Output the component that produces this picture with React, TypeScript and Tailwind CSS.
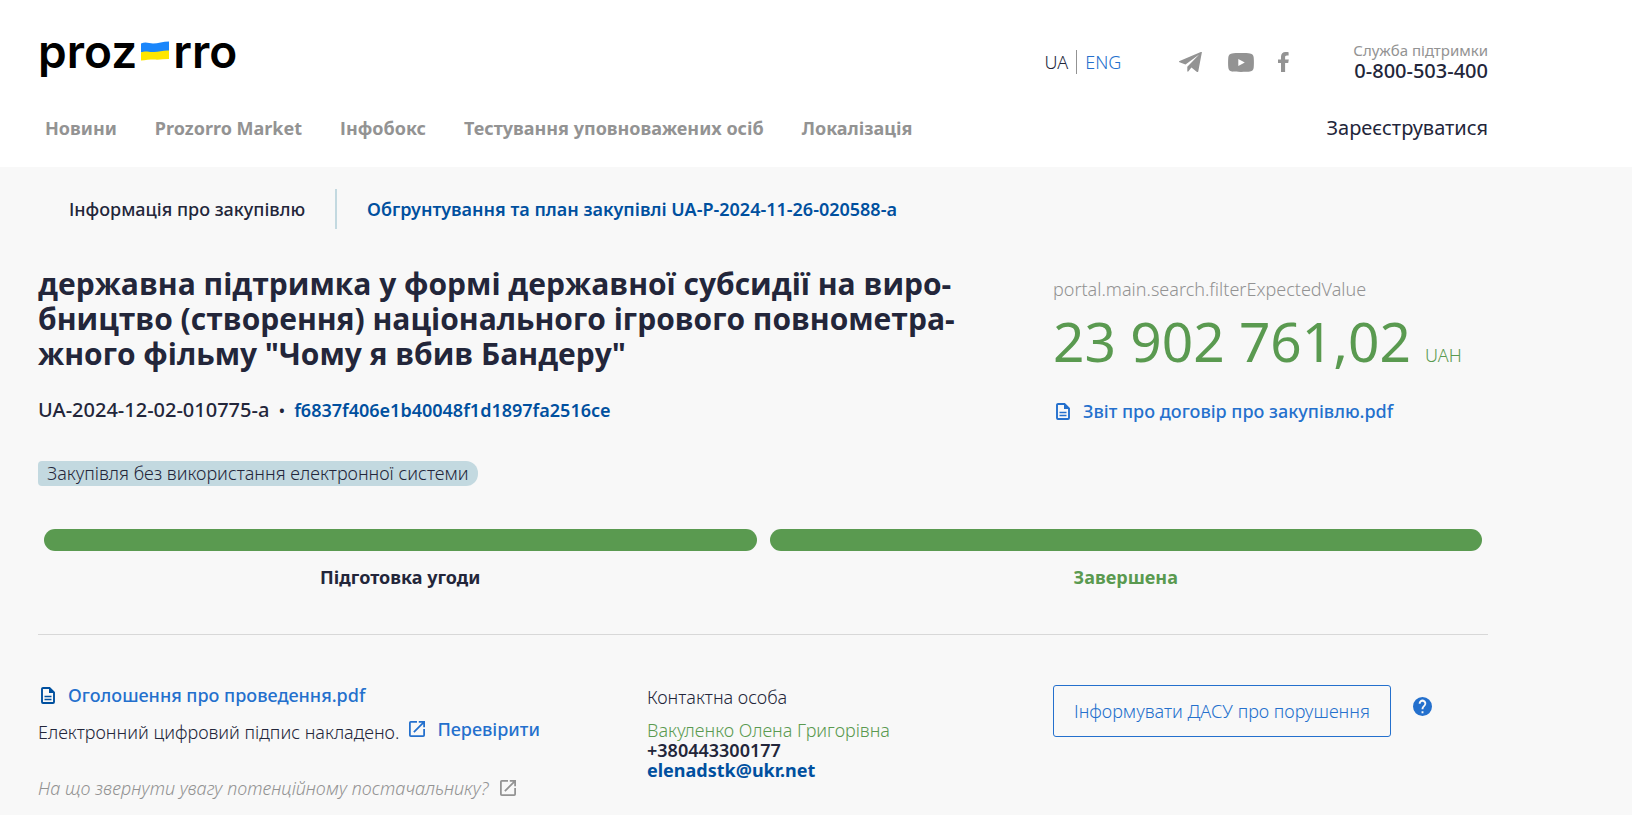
import React from 'react';

const NAV_LINKS = ['Новини', 'Prozorro Market', 'Інфобокс', 'Тестування уповноважених осіб', 'Локалізація'];

const STAGES = [
  { label: 'Підготовка угоди', active: false },
  { label: 'Завершена', active: true },
];

function Logo() {
  return (
    <a href="#" className="flex h-[42px] items-center font-['Inter',sans-serif] text-[46px] font-semibold leading-none text-black">
      <span>proz</span>
      <svg viewBox="0 0 28 19" className="mx-1 h-5 w-7" aria-hidden="true">
        <path d="M0 2c5-2 8 0 12 0 5 0 10-2 16-2v10c-5 0-10 1-15 1-5 0-8-1-13 0z" fill="#1a86fb" />
        <path d="M0 11c5-2 8 0 13-.5 5 0 10-2 15-1.500v8.500c-5 0-10 1-15 .5-5 0-8 .5-13 1z" fill="#ffe600" />
      </svg>
      <span>rro</span>
    </a>
  );
}

function DocIcon({ className }: { className: string }) {
  return (
    <svg viewBox="0 0 14 17" className={`h-[17px] w-[14px] shrink-0 ${className}`} fill="none" aria-hidden="true">
      <path d="M2 1h6.500L13 5.500V15a1 1 0 0 1-1 1H2a1 1 0 0 1-1-1V2a1 1 0 0 1 1-1z" stroke="currentColor" strokeWidth="1.900" />
      <path d="M8 1v5h5z" fill="currentColor" />
      <path d="M3.500 9.500h7M3.500 12.500h7" stroke="currentColor" strokeWidth="1.500" />
    </svg>
  );
}

function ExternalIcon({ className }: { className: string }) {
  return (
    <svg viewBox="3 3 18 18" className={`h-4 w-4 shrink-0 ${className}`} fill="currentColor" aria-hidden="true">
      <path d="M19 19H5V5h7V3H5a2 2 0 0 0-2 2v14a2 2 0 0 0 2 2h14a2 2 0 0 0 2-2v-7h-2v7zM14 3v2h3.590l-9.830 9.830 1.410 1.410L19 6.410V10h2V3h-7z" />
    </svg>
  );
}

function Socials() {
  return (
    <div className="flex items-center text-[#939393]">
      <a href="#" aria-label="Telegram">
        <svg viewBox="0 0 23 20" className="h-5 w-[23px]" fill="currentColor">
          <path d="M22.900.3 19.300 19.300c-.1.700-.7.900-1.300.6l-5.600-4.300-2.900 3.700c-.3.400-.8.500-1 .3-.2-.1-.2-.3-.2-.6v-4.300L20.200 2.400 6.500 12.600.5 10.300c-.7-.3-.7-.9.1-1.200L21.800.1c.7-.3 1.200-.2 1.100.2z" />
        </svg>
      </a>
      <a href="#" aria-label="YouTube" className="ml-[26px]">
        <svg viewBox="0 0 26 19" className="h-[19px] w-[26px]" fill="currentColor">
          <path fillRule="evenodd" d="M4 .4C7 0 19 0 22 .4c2.500.3 3.500 1.600 3.700 4 .3 3 .3 7 0 10.200-.2 2.400-1.200 3.700-3.700 4-3 .4-15 .4-18 0-2.500-.3-3.500-1.600-3.700-4-.3-3.200-.3-7.200 0-10.200C.5 2 1.500.7 4 .4zM10.300 6v7l6.500-3.500z" />
        </svg>
      </a>
      <a href="#" aria-label="Facebook" className="ml-6">
        <svg viewBox="0 0 11 20" className="h-5 w-[11px]" fill="currentColor">
          <path d="M3 20v-9H0V7.400h3V4.800C3 1.700 4.800 0 7.600 0 9 0 10.600.2 10.600.2v3.200H9C7.500 3.400 7.100 4.200 7.100 5.200v2.200h3.700L10.200 11H7.100v9z" />
        </svg>
      </a>
    </div>
  );
}

function Header() {
  return (
    <header className="bg-white">
      <div className="flex h-[167px] max-w-[1488px] flex-col pl-[38px]">
        <div className="flex items-start justify-between pt-[30px]">
          <Logo />
          <div className="flex items-start pt-[10px]">
            <div className="mt-[10px] flex items-center font-[350] leading-6">
              <span className="border-r border-[#939393] pr-2">UA</span>
              <a href="#" className="pl-2 text-[#2470cd]">ENG</a>
            </div>
            <div className="mt-3 ml-[58px]">
              <Socials />
            </div>
            <div className="ml-16 flex flex-col text-right">
              <span className="text-[15px] leading-5 text-[#939393]">Служба підтримки</span>
              <a href="#" className="text-xl font-medium leading-[22px]">0-800-503-400</a>
            </div>
          </div>
        </div>
        <div className="mt-8 flex items-center justify-between">
          <nav className="flex gap-[38px] pl-[7px] font-bold leading-7 text-[#939393]">
            {NAV_LINKS.map(link => (
              <a key={link} href="#">{link}</a>
            ))}
          </nav>
          <a href="#" className="text-xl leading-7">Зареєструватися</a>
        </div>
      </div>
    </header>
  );
}

export default function App() {
  return (
    <div className="min-h-screen overflow-hidden bg-[#f8f8f8] font-['Noto_Sans','Open_Sans',sans-serif] text-lg leading-5 text-[#23263a]">
      <Header />

      <main className="max-w-[1488px] pl-[38px]">
        {/* Tabs */}
        <div className="flex items-center pt-[22px] pl-[31px]">
          <span className="border-r-2 border-[#c3d9e0] py-[10px] pr-[30px] font-medium">Інформація про закупівлю</span>
          <a href="#" className="pl-[30px] font-semibold text-[#00509f]">
            Обгрунтування та план закупівлі UA-P-2024-11-26-020588-a
          </a>
        </div>

        {/* Title and amount */}
        <div className="mt-[37px] grid grid-cols-[70%_30%]">
          <div>
            <h1 className="font-['Open_Sans',sans-serif] text-3xl font-bold leading-[35px]">
              державна підтримка у формі державної субсидії на виро-
              <br />
              бництво (створення) національного ігрового повнометра-
              <br />
              жного фільму "Чому я вбив Бандеру"
            </h1>
            <div className="mt-[27px] flex items-center gap-[9px] leading-6">
              <span className="text-xl font-medium leading-6">UA-2024-12-02-010775-a</span>
              <span>•</span>
              <a href="#" className="font-semibold text-[#00509f]">f6837f406e1b40048f1d1897fa2516ce</a>
            </div>
            <div className="mt-[39px] flex">
              <span className="rounded-l-sm rounded-r-xl bg-[#c3d9e0] px-[9px] font-[350] leading-[25px]">
                Закупівля без використання електронної системи
              </span>
            </div>
          </div>
          <div className="pt-[11px]">
            <div className="font-[350] leading-6 text-[#939393]">portal.main.search.filterExpectedValue</div>
            <div className="flex items-baseline gap-[14px] text-[#5a9a50]">
              <span className="text-[55px] leading-[80px]">23 902 761,02</span>
              <span className="font-[350]">UAH</span>
            </div>
            <a href="#" className="mt-5 flex items-center gap-[13px] pl-[3px] font-medium text-[#2470cd]">
              <DocIcon className="text-[#2470cd]" />
              Звіт про договір про закупівлю.pdf
            </a>
          </div>
        </div>

        {/* Stages */}
        <div className="mt-[43px] grid grid-cols-2 gap-[13px] px-[6px]">
          {STAGES.map(stage => (
            <div key={stage.label} className="text-center">
              <div className="h-[22px] rounded-full bg-[#5a9a50]" />
              <div className={`mt-[14px] font-bold leading-6 ${stage.active ? 'text-[#5a9a50]' : ''}`}>{stage.label}</div>
            </div>
          ))}
        </div>

        <hr className="mt-[45px] border-[#d8d8d8]" />

        {/* Documents, contact, report */}
        <div className="mt-[50px] grid grid-cols-[42%_28%_30%]">
          <div>
            <a href="#" className="flex items-center gap-[13px] pl-[3px] font-medium text-[#2470cd]">
              <DocIcon className="text-[#00509f]" />
              Оголошення про проведення.pdf
            </a>
            <div className="mt-3 flex items-start gap-[10px]">
              <span className="pt-[5px] font-[350]">Електронний цифровий підпис накладено.</span>
              <a href="#" className="flex items-center gap-3 pt-[2px] font-medium text-[#2470cd]">
                <ExternalIcon className="text-[#2470cd]" />
                Перевірити
              </a>
            </div>
            <a href="#" className="mt-9 flex items-center gap-3 font-light italic text-[#939393]">
              На що звернути увагу потенційному постачальнику?
              <ExternalIcon className="text-[#939393]" />
            </a>
          </div>

          <div className="flex flex-col items-start pt-[2px]">
            <span className="font-[350]">Контактна особа</span>
            <span className="mt-[13px] font-[350] text-[#5a9a50]">Вакуленко Олена Григорівна</span>
            <span className="font-semibold">+380443300177</span>
            <a href="#" className="font-bold text-[#00509f]">elenadstk@ukr.net</a>
          </div>

          <div className="flex items-start">
            <button type="button" className="h-[52px] cursor-pointer rounded-[3px] border border-[#2470cd] px-5 font-[350] text-[#2470cd]">
              Інформувати ДАСУ про порушення
            </button>
            <button type="button" aria-label="Довідка" className="mt-3 ml-[22px] cursor-pointer">
              <svg viewBox="2 2 20 20" className="h-[19px] w-[19px]" fill="#2470cd">
                <path d="M12 2a10 10 0 1 0 0 20 10 10 0 0 0 0-20zm1 17h-2v-2h2v2zm2.070-7.750-.9.920C13.450 12.900 13 13.500 13 15h-2v-.5c0-1.100.450-2.100 1.170-2.830l1.240-1.260A2 2 0 1 0 10 9H8a4 4 0 1 1 7.070 2.250z" />
              </svg>
            </button>
          </div>
        </div>
      </main>
    </div>
  );
}
